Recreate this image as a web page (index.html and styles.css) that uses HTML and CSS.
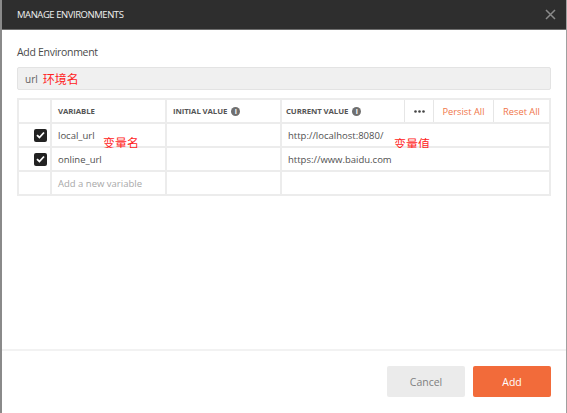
FILE: index.html
```html
<!DOCTYPE html>
<html>
<head>
    <title>Manage Environments</title>
    <link rel="stylesheet" href="styles.css">
</head>
<body>
    <div class="dialog">
        <div class="dialog-header">
            <span class="dialog-title">MANAGE ENVIRONMENTS</span>
            <svg class="close" width="11" height="11" viewBox="0 0 11 11">
                <path d="M1 1L10 10M10 1L1 10" stroke="#8a8a8a" stroke-width="1.5" fill="none"/>
            </svg>
        </div>

        <div class="dialog-body">
            <div class="section-label">Add Environment</div>
            <div class="env-name">
                <span class="env-value">url</span>
                <span class="note">环境名</span>
            </div>

            <div class="var-table">
                <div class="cell"></div>
                <div class="cell head">VARIABLE</div>
                <div class="cell head">INITIAL VALUE <span class="info">i</span></div>
                <div class="cell head head-actions">
                    <span class="head-title">CURRENT VALUE <span class="info">i</span></span>
                    <span class="action dots">
                        <svg width="11" height="3" viewBox="0 0 11 3"><circle cx="1.5" cy="1.5" r="1.3" fill="#444"/><circle cx="5.5" cy="1.5" r="1.3" fill="#444"/><circle cx="9.5" cy="1.5" r="1.3" fill="#444"/></svg>
                    </span>
                    <span class="action link persist">Persist All</span>
                    <span class="action link reset">Reset All</span>
                </div>

                <div class="cell check-cell"><span class="checkbox"><svg width="9" height="8" viewBox="0 0 9 8"><path d="M1 4.2L3.4 6.5L8 1.5" stroke="#fff" stroke-width="1.8" fill="none"/></svg></span></div>
                <div class="cell">local_url<span class="note note-var">变量名</span></div>
                <div class="cell"></div>
                <div class="cell">http://localhost:8080/<span class="note note-val">变量值</span></div>

                <div class="cell check-cell"><span class="checkbox"><svg width="9" height="8" viewBox="0 0 9 8"><path d="M1 4.2L3.4 6.5L8 1.5" stroke="#fff" stroke-width="1.8" fill="none"/></svg></span></div>
                <div class="cell">online_url</div>
                <div class="cell"></div>
                <div class="cell">https://www.baidu.com</div>

                <div class="cell"></div>
                <div class="cell placeholder">Add a new variable</div>
                <div class="cell"></div>
                <div class="cell"></div>
            </div>
        </div>

        <div class="dialog-footer">
            <button class="btn btn-cancel">Cancel</button>
            <button class="btn btn-add">Add</button>
        </div>
    </div>
</body>
</html>
```

FILE: styles.css
```css
body {
    margin: 0;
    background: #fff;
    font-family: "Open Sans", "Liberation Sans", "Noto Sans CJK SC", sans-serif;
    color: #505050;
}
.dialog {
    width: 567px;
    height: 413px;
    box-sizing: border-box;
    border-left: 2px solid #8a8a8a;
    border-right: 1px solid #a0a0a0;
    display: flex;
    flex-direction: column;
}
.dialog-header {
    height: 29px;
    background: #2e2e2e;
    border-bottom: 1px solid #6e6e6e;
    display: flex;
    align-items: center;
    justify-content: space-between;
    padding: 0 10px 0 15px;
}
.dialog-title {
    color: #f0f0f0;
    font-size: 9.5px;
    letter-spacing: -0.45px;
}
.dialog-body {
    flex: 1;
    padding: 15px 15px 0 15px;
}
.section-label {
    font-size: 10.5px;
    letter-spacing: -0.3px;
    color: #4a4a4a;
    line-height: 14px;
}
.env-name {
    margin-top: 8px;
    height: 23px;
    box-sizing: border-box;
    background: #f0f0f0;
    border: 1px solid #e3e3e3;
    border-radius: 2px;
    display: flex;
    align-items: center;
    padding-left: 7px;
}
.env-value {
    font-size: 10px;
    color: #606060;
}
.note {
    color: #ff2222;
    font-family: "Noto Sans CJK SC", sans-serif;
    font-size: 12px;
    margin-left: 5px;
}
.var-table {
    margin-top: 8px;
    display: grid;
    grid-template-columns: 31px 113px 113px 1fr;
    grid-auto-rows: 22px;
    gap: 2px;
    padding: 2px;
    background: #ececec;
}
.cell {
    background: #fff;
    font-size: 9.5px;
    color: #505050;
    display: flex;
    align-items: center;
    padding-left: 6px;
    position: relative;
}
.head {
    font-size: 7.8px;
    font-weight: bold;
    color: #555;
    letter-spacing: -0.1px;
}
.info {
    display: inline-flex;
    align-items: center;
    justify-content: center;
    width: 9px;
    height: 9px;
    border-radius: 50%;
    background: #6f6f6f;
    color: #fff;
    font-size: 7px;
    font-weight: bold;
    margin-left: 4px;
}
.head-actions {
    padding-left: 4px;
}
.head-title {
    flex: 1;
    display: flex;
    align-items: center;
}
.action {
    height: 100%;
    display: flex;
    align-items: center;
    justify-content: center;
    border-left: 1px solid #e6e6e6;
    box-sizing: border-box;
}
.dots {
    width: 29px;
}
.link {
    color: #f0764a;
    font-size: 9.3px;
    font-weight: normal;
    letter-spacing: 0;
}
.persist {
    width: 60px;
}
.reset {
    width: 56px;
}
.check-cell {
    justify-content: flex-end;
    padding-right: 3px;
}
.checkbox {
    width: 13px;
    height: 13px;
    border-radius: 2px;
    background: #222;
    display: flex;
    align-items: center;
    justify-content: center;
}
.placeholder {
    color: #a8a8a8;
}
.note-var {
    position: absolute;
    left: 46px;
    top: 10px;
}
.note-val {
    position: absolute;
    left: 107px;
    top: 11px;
}
.dialog-footer {
    height: 64px;
    box-sizing: border-box;
    border-top: 2px solid #f2f2f2;
    display: flex;
    justify-content: flex-end;
    align-items: flex-start;
    gap: 8px;
    padding: 15px 15px 0 0;
}
.btn {
    width: 78px;
    height: 31px;
    border: none;
    border-radius: 2px;
    font-family: "Open Sans", "Liberation Sans", sans-serif;
    font-size: 10.5px;
}
.btn-cancel {
    background: #ebebeb;
    color: #808080;
}
.btn-add {
    background: #f26b3a;
    color: #fff;
}
```
